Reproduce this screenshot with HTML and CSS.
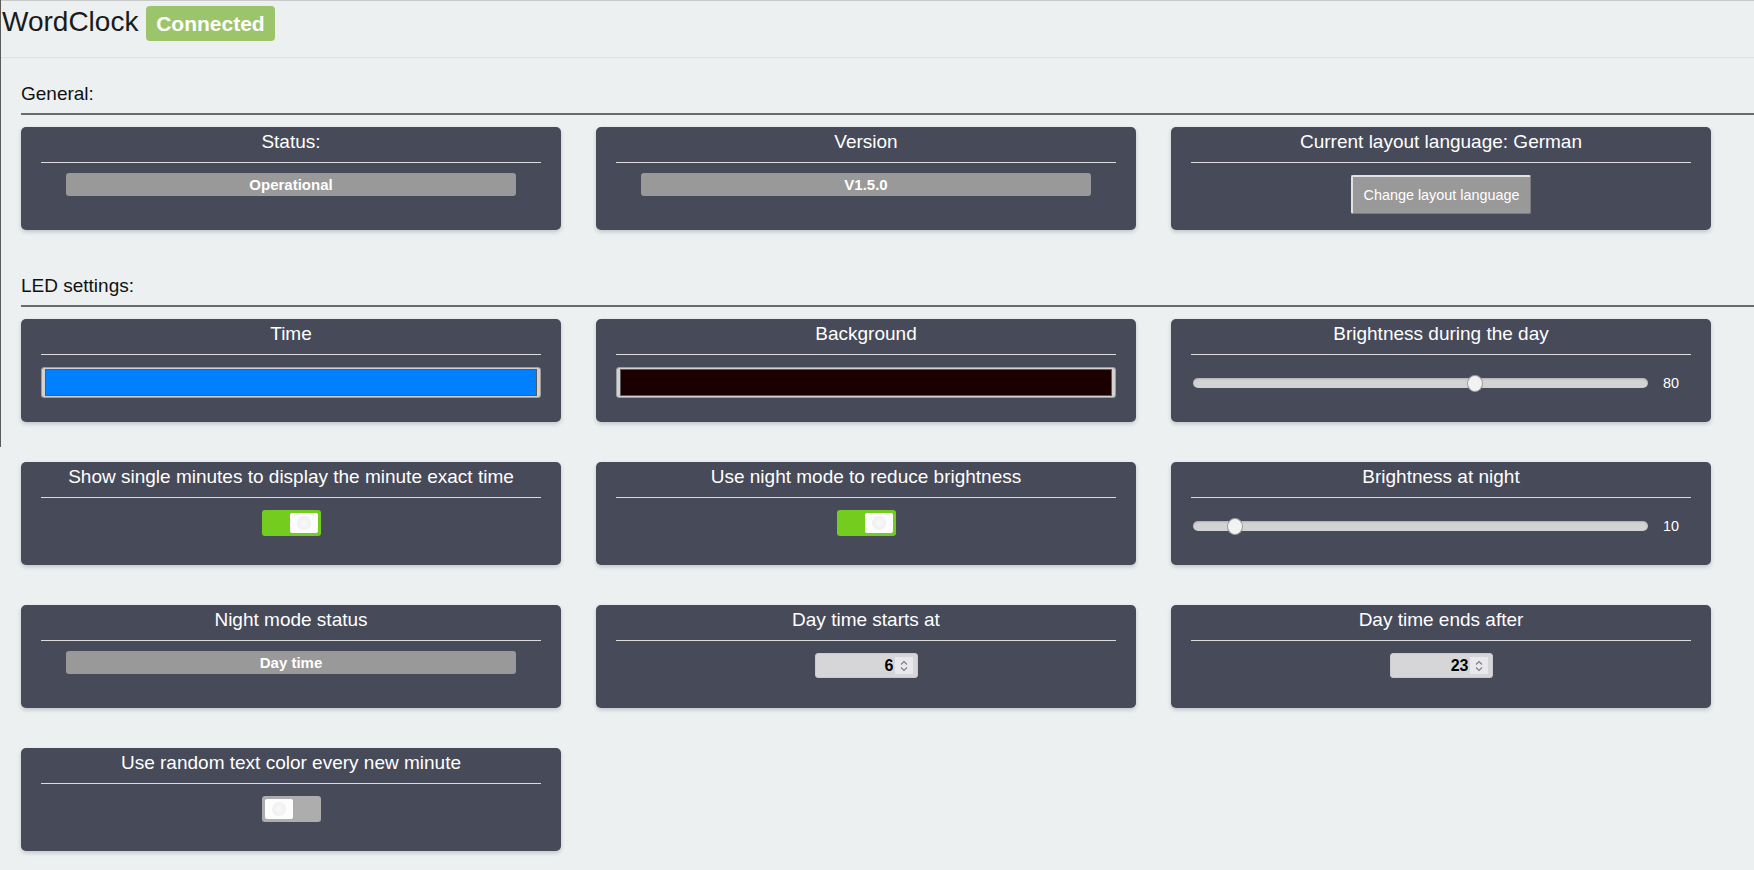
FILE: index.html
```html
<!DOCTYPE html>
<html lang="en">
<head>
<meta charset="utf-8">
<title>WordClock</title>
<link rel="stylesheet" href="styles.css">
</head>
<body>
<div class="page">
  <header class="topbar">
    <span class="brand">WordClock</span> <span class="badge">Connected</span>
  </header>

  <main class="content">
    <section class="section">
      <h2 class="section-title">General:</h2>
      <div class="card-grid">
        <div class="card">
          <div class="card-title">Status:</div>
          <div class="card-body card-body--status">
            <div class="status-bar">Operational</div>
          </div>
        </div>
        <div class="card">
          <div class="card-title">Version</div>
          <div class="card-body card-body--status">
            <div class="status-bar">V1.5.0</div>
          </div>
        </div>
        <div class="card">
          <div class="card-title">Current layout language: German</div>
          <div class="card-body">
            <button class="btn" type="button">Change layout language</button>
          </div>
        </div>
      </div>
    </section>

    <section class="section">
      <h2 class="section-title">LED settings:</h2>
      <div class="card-grid">
        <div class="card">
          <div class="card-title">Time</div>
          <div class="card-body">
            <input class="color-input" type="color" value="#0080ff">
          </div>
        </div>
        <div class="card">
          <div class="card-title">Background</div>
          <div class="card-body">
            <input class="color-input" type="color" value="#1a0000">
          </div>
        </div>
        <div class="card">
          <div class="card-title">Brightness during the day</div>
          <div class="card-body card-body--slider">
            <div class="slider-row">
              <input class="range" type="range" min="0" max="128" value="80">
              <span class="range-value">80</span>
            </div>
          </div>
        </div>

        <div class="card">
          <div class="card-title">Show single minutes to display the minute exact time</div>
          <div class="card-body">
            <div class="toggle"><span class="knob"><span class="knob-dot"></span></span></div>
          </div>
        </div>
        <div class="card">
          <div class="card-title">Use night mode to reduce brightness</div>
          <div class="card-body">
            <div class="toggle"><span class="knob"><span class="knob-dot"></span></span></div>
          </div>
        </div>
        <div class="card">
          <div class="card-title">Brightness at night</div>
          <div class="card-body card-body--slider">
            <div class="slider-row">
              <input class="range" type="range" min="0" max="128" value="10">
              <span class="range-value">10</span>
            </div>
          </div>
        </div>

        <div class="card">
          <div class="card-title">Night mode status</div>
          <div class="card-body card-body--status">
            <div class="status-bar">Day time</div>
          </div>
        </div>
        <div class="card">
          <div class="card-title">Day time starts at</div>
          <div class="card-body">
            <div class="num">
              <span class="num-val">6</span>
              <span class="spin"><svg width="10" height="14" viewBox="0 0 10 14"><path d="M2 5.5 L5 2.5 L8 5.5 M2 8.5 L5 11.5 L8 8.5" fill="none" stroke="#7e7e7e" stroke-width="1.1"/></svg></span>
            </div>
          </div>
        </div>
        <div class="card">
          <div class="card-title">Day time ends after</div>
          <div class="card-body">
            <div class="num">
              <span class="num-val">23</span>
              <span class="spin"><svg width="10" height="14" viewBox="0 0 10 14"><path d="M2 5.5 L5 2.5 L8 5.5 M2 8.5 L5 11.5 L8 8.5" fill="none" stroke="#7e7e7e" stroke-width="1.1"/></svg></span>
            </div>
          </div>
        </div>

        <div class="card">
          <div class="card-title">Use random text color every new minute</div>
          <div class="card-body">
            <div class="toggle toggle--off"><span class="knob"><span class="knob-dot"></span></span></div>
          </div>
        </div>
      </div>
    </section>
  </main>
</div>
</body>
</html>
```

FILE: styles.css
```css
html, body {
  margin: 0;
  padding: 0;
}

body {
  background: #ecf0f1;
  font-family: "Liberation Sans", Arial, sans-serif;
  color: #111;
}

.page {
  position: relative;
  min-height: 870px;
}

.page::before {
  content: "";
  position: absolute;
  left: 0;
  top: 0;
  width: 1px;
  height: 447px;
  background: #5b5b5b;
}

/* Header */
.topbar {
  box-sizing: border-box;
  height: 58px;
  padding: 0 0 0 2px;
  border-top: 1px solid #c9c9c9;
  border-bottom: 1px solid #dde1e2;
  font-size: 28px;
  line-height: 42px;
  white-space: nowrap;
}

.brand {
  color: #1a1a1a;
}

.badge {
  display: inline-block;
  padding: 6px 10px 5px;
  line-height: normal;
  font-size: 21px;
  font-weight: bold;
  color: #fff;
  background: #9cc46b;
  border-radius: 4px;
}

/* Content */
.content {
  padding: 25px 0 0 21px;
}

.section + .section {
  margin-top: 45px;
}

.section-title {
  margin: 0 0 12px;
  padding: 0 0 8px;
  font-size: 19px;
  line-height: 22px;
  font-weight: normal;
  color: #111;
  border-bottom: 2px solid #6b6b6b;
}

.card-grid {
  display: grid;
  grid-template-columns: repeat(3, 540px);
  column-gap: 35px;
  row-gap: 40px;
}

.card {
  box-sizing: border-box;
  height: 103px;
  padding: 4px 20px 0;
  background: #474a59;
  border-radius: 5px;
  box-shadow: 0 2px 4px rgba(0, 0, 0, 0.18);
  color: #fff;
}

.card-title {
  font-size: 19px;
  line-height: 22px;
  text-align: center;
  padding-bottom: 9px;
  border-bottom: 1px solid #dcdcdc;
  white-space: nowrap;
}

.card-body {
  display: flex;
  justify-content: center;
  padding-top: 12px;
}

.card-body--status {
  padding-top: 10px;
}

.card-body--slider {
  padding-top: 18px;
}

/* Status bar */
.status-bar {
  width: 90%;
  height: 23px;
  line-height: 23px;
  background: #999;
  border-radius: 3px;
  text-align: center;
  font-size: 15px;
  font-weight: bold;
  color: #fff;
}

/* Button */
.btn {
  box-sizing: border-box;
  height: 39px;
  padding: 0 10px;
  font-family: inherit;
  font-size: 14.4px;
  color: #fff;
  background: #999;
  border-top: 2px solid #e2e2e2;
  border-left: 2px solid #e2e2e2;
  border-right: 1px solid #7c7c7c;
  border-bottom: 1px solid #7c7c7c;
  border-radius: 2px;
  cursor: pointer;
}

/* Color input */
.color-input {
  -webkit-appearance: none;
  appearance: none;
  box-sizing: border-box;
  display: block;
  width: 100%;
  height: 31px;
  margin: 0;
  padding: 1px 3px;
  background: #d2d2d2;
  border: 1px solid #9c9c9c;
  border-radius: 3px;
  cursor: pointer;
}

.color-input::-webkit-color-swatch-wrapper {
  padding: 0;
}

.color-input::-webkit-color-swatch {
  border: 1px solid #5a5a5a;
  border-radius: 0;
}

/* Range slider */
.slider-row {
  display: flex;
  align-items: center;
  width: 100%;
  height: 20px;
}

.range {
  -webkit-appearance: none;
  appearance: none;
  width: 455px;
  height: 17px;
  margin: 0 0 0 2px;
  padding: 0;
  background: transparent;
}

.range::-webkit-slider-runnable-track {
  height: 10px;
  border-radius: 5px;
  background: #d3d3d3;
  box-shadow: inset 0 1px 2px rgba(0, 0, 0, 0.18);
}

.range::-webkit-slider-thumb {
  -webkit-appearance: none;
  appearance: none;
  box-sizing: border-box;
  width: 16px;
  height: 17px;
  margin-top: -3.5px;
  border-radius: 50%;
  background: #f2f2f2;
  border: 1px solid #9a9a9a;
}

.range-value {
  margin-left: 15px;
  font-size: 14.4px;
  color: #fff;
}

/* Toggle */
.toggle {
  box-sizing: border-box;
  display: flex;
  justify-content: flex-end;
  width: 59px;
  height: 26px;
  padding: 3px;
  background: #73cc1e;
  border-radius: 3px;
}

.toggle--off {
  justify-content: flex-start;
  background: #adadad;
}

.knob {
  display: flex;
  align-items: center;
  justify-content: center;
  width: 28px;
  height: 20px;
  background: #fdfdfd;
  border-radius: 2px;
}

.knob-dot {
  width: 14px;
  height: 14px;
  border-radius: 50%;
  background: radial-gradient(circle, #f9f9f9 0%, #ececec 100%);
}

/* Number input */
.num {
  box-sizing: border-box;
  display: flex;
  align-items: center;
  justify-content: flex-end;
  width: 103px;
  height: 25px;
  padding-right: 4px;
  background: #d6d6d9;
  border: 1px solid #cacace;
  border-radius: 3px;
}

.num-val {
  margin-right: 1px;
  font-size: 16px;
  font-weight: bold;
  color: #000;
}

.spin {
  display: flex;
  align-items: center;
  justify-content: center;
  width: 18px;
  height: 17px;
  background: #e8e8ed;
}
```
